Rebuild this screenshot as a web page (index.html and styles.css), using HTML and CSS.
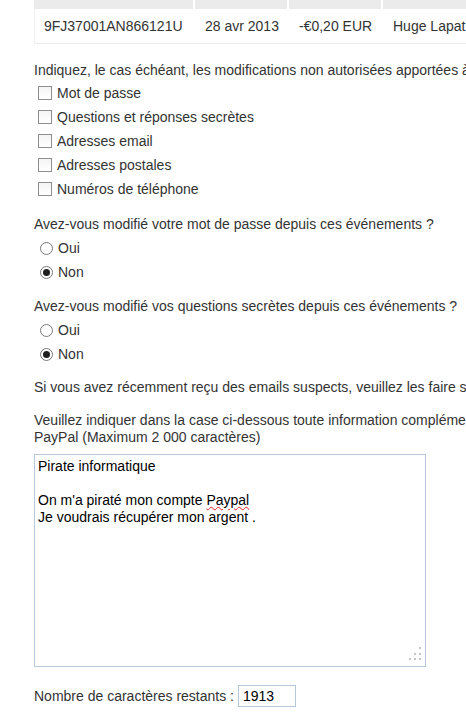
FILE: index.html
```html
<!DOCTYPE html>
<html lang="fr">
<head>
<meta charset="utf-8">
<title>Litige PayPal</title>
<link rel="stylesheet" href="styles.css">
</head>
<body>
<div class="page">
  <table class="tx">
    <thead>
      <tr><th class="c1"></th><th class="c2"></th><th class="c3"></th><th class="c4"></th></tr>
    </thead>
    <tbody>
      <tr><td>9FJ37001AN866121U</td><td>28 avr 2013</td><td>-€0,20 EUR</td><td>Huge Lapatrie</td></tr>
    </tbody>
  </table>

  <section class="block first">
    <p class="line">Indiquez, le cas échéant, les modifications non autorisées apportées à votre compte :</p>
    <ul class="opts checks">
      <li class="opt"><span class="cb"></span><span>Mot de passe</span></li>
      <li class="opt"><span class="cb"></span><span>Questions et réponses secrètes</span></li>
      <li class="opt"><span class="cb"></span><span>Adresses email</span></li>
      <li class="opt"><span class="cb"></span><span>Adresses postales</span></li>
      <li class="opt"><span class="cb"></span><span>Numéros de téléphone</span></li>
    </ul>
  </section>

  <section class="block q1">
    <p class="line">Avez-vous modifié votre mot de passe depuis ces événements ?</p>
    <ul class="opts radios">
      <li class="opt"><span class="rb"></span><span>Oui</span></li>
      <li class="opt"><span class="rb on"></span><span>Non</span></li>
    </ul>
  </section>

  <section class="block">
    <p class="line">Avez-vous modifié vos questions secrètes depuis ces événements ?</p>
    <ul class="opts radios">
      <li class="opt"><span class="rb"></span><span>Oui</span></li>
      <li class="opt"><span class="rb on"></span><span>Non</span></li>
    </ul>
  </section>

  <section class="block spoof">
    <p class="line">Si vous avez récemment reçu des emails suspects, veuillez les faire suivre à spoof@paypal.fr.</p>
  </section>

  <section class="block info">
    <p class="line">Veuillez indiquer dans la case ci-dessous toute information complémentaire concernant votre compte<br>PayPal (Maximum 2 000 caractères)</p>
    <div class="area">
      <div class="area-text">Pirate informatique<br><br>On m'a piraté mon compte <span class="spell">Paypal</span><br>Je voudrais récupérer mon argent .</div>
      <svg class="grip" width="14" height="16" viewBox="0 0 14 16">
        <rect x="11" y="0" width="2" height="2" fill="#c4c4c4"/>
        <rect x="6" y="6" width="2" height="2" fill="#c4c4c4"/>
        <rect x="11" y="6" width="2" height="2" fill="#c4c4c4"/>
        <rect x="1" y="11" width="2" height="2" fill="#c4c4c4"/>
        <rect x="6" y="11" width="2" height="2" fill="#c4c4c4"/>
        <rect x="11" y="11" width="2" height="2" fill="#c4c4c4"/>
      </svg>
    </div>
  </section>

  <div class="count">
    <span>Nombre de caractères restants :</span>
    <span class="count-box">1913</span>
  </div>
</div>
</body>
</html>
```
FILE: styles.css
```css
html, body {
  margin: 0;
  padding: 0;
  overflow: hidden;
  background: #fff;
}
body {
  font-family: "Liberation Sans", Arial, sans-serif;
  font-size: 14px;
  color: #333;
}
.page {
  width: 640px;
  padding-left: 34px;
}
.tx {
  border-collapse: separate;
  border-spacing: 0;
  width: 600px;
  font-size: 14px;
}
.tx th {
  height: 9px;
  padding: 0;
  background: #ebebeb;
  border-right: 2px solid #fff;
}
.tx th.c1 { width: 159px; }
.tx th.c2 { width: 92px; }
.tx th.c3 { width: 92px; }
.tx td {
  height: 34px;
  padding: 0 0 0 10px;
  border-bottom: 1px solid #ececec;
  white-space: nowrap;
  color: #333;
}
.tx td:first-child {
  border-left: 1px solid #f0f0f0;
  padding-left: 9px;
}
.block {
  margin-top: 14px;
}
.block.first {
  margin-top: 18px;
}
.block.q1 {
  margin-top: 15px;
}
.block.spoof {
  margin-top: 13px;
}
.block.info {
  margin-top: 16px;
}
.line {
  margin: 0;
  line-height: 17px;
  white-space: nowrap;
}
.opts {
  list-style: none;
  margin: 2px 0 0;
  padding: 0;
}
.opts.radios {
  margin-top: 3px;
}
.opt {
  display: flex;
  align-items: center;
  height: 24px;
  white-space: nowrap;
}
.cb {
  box-sizing: border-box;
  width: 14px;
  height: 14px;
  margin: 0 5px 0 4px;
  border: 1px solid #8e8e8e;
  background: linear-gradient(#f4f4f4, #fff);
}
.rb {
  box-sizing: border-box;
  width: 13px;
  height: 13px;
  margin: 0 5px 0 6px;
  border: 1px solid #7a7a7a;
  border-radius: 50%;
  background: #fff;
  display: flex;
  align-items: center;
  justify-content: center;
}
.rb.on::after {
  content: "";
  width: 7px;
  height: 7px;
  border-radius: 50%;
  background: #1e1e1e;
}
.info .line {
  margin-bottom: 8px;
}
.area {
  position: relative;
  box-sizing: border-box;
  width: 392px;
  height: 213px;
  border: 1px solid #b7c7dc;
  padding: 3px 3px;
  color: #000;
  line-height: 17px;
}
.spell {
  text-decoration: underline wavy #e02020;
  text-decoration-thickness: 1px;
  text-underline-offset: 1px;
}
.grip {
  position: absolute;
  right: 3px;
  bottom: 3px;
}
.count {
  margin-top: 18px;
  display: flex;
  align-items: center;
  gap: 4px;
  white-space: nowrap;
}
.count-box {
  box-sizing: border-box;
  width: 58px;
  height: 22px;
  border: 1px solid #b7c7dc;
  padding: 0 4px;
  line-height: 20px;
  color: #000;
}
```
